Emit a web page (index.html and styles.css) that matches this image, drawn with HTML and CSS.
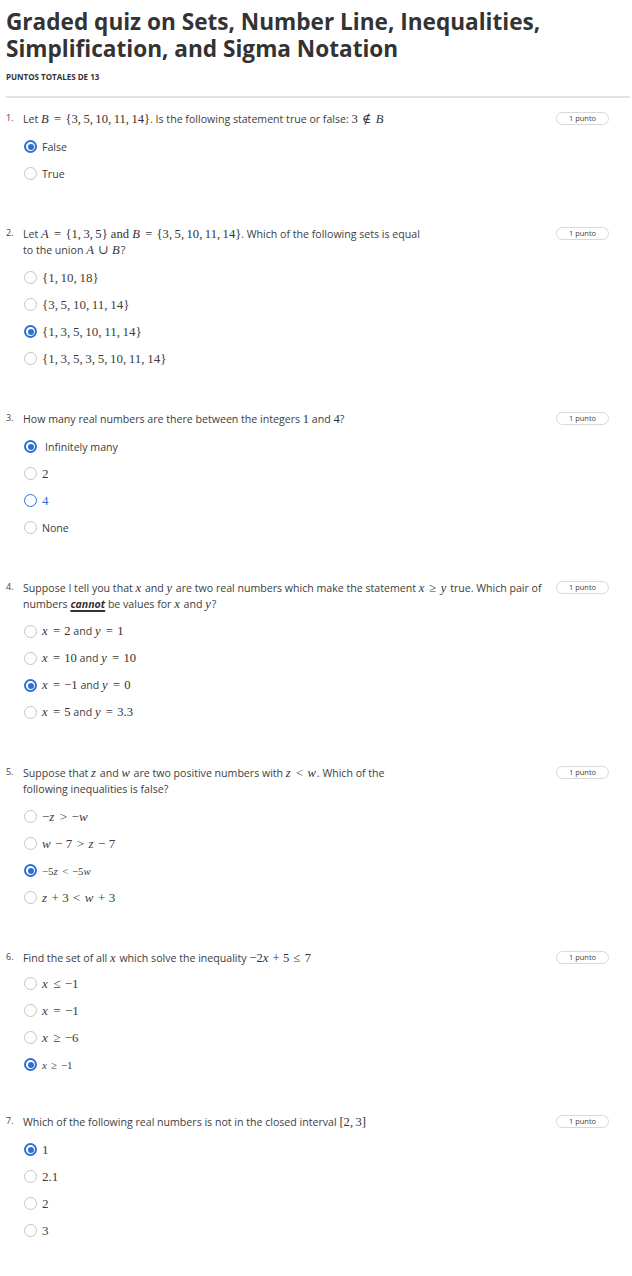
FILE: index.html
```html
<!DOCTYPE html>
<html lang="en">
<head>
<meta charset="utf-8">
<title>Graded quiz</title>
<link rel="stylesheet" href="styles.css">
</head>
<body>
<div class="page">
  <header class="header">
    <h1 class="title">Graded quiz on Sets, Number Line, Inequalities, Simplification, and Sigma Notation</h1>
    <div class="total">PUNTOS TOTALES DE 13</div>
  </header>

  <section class="q">
    <div class="qhead">
      <span class="num">1.</span>
      <div class="prompt">Let <span class="m"><i>B</i><span class="r">=</span>{3,&#8201;5,&#8201;10,&#8201;11,&#8201;14}</span>. Is the following statement true or false: <span class="m">3<span class="r">&#8713;</span><i>B</i></span></div>
      <span class="badge">1 punto</span>
    </div>
    <div class="opts">
      <div class="opt"><span class="radio sel"></span><span class="lbl">False</span></div>
      <div class="opt"><span class="radio"></span><span class="lbl">True</span></div>
    </div>
  </section>

  <section class="q">
    <div class="qhead">
      <span class="num">2.</span>
      <div class="prompt">Let <span class="m"><i>A</i><span class="r">=</span>{1,&#8201;3,&#8201;5} and <i>B</i><span class="r">=</span>{3,&#8201;5,&#8201;10,&#8201;11,&#8201;14}</span>. Which of the following sets is equal<br>to the union <span class="m"><i>A</i><span class="b">&#8746;</span><i>B</i></span>?</div>
      <span class="badge">1 punto</span>
    </div>
    <div class="opts">
      <div class="opt"><span class="radio"></span><span class="lbl m">{1,&#8201;10,&#8201;18}</span></div>
      <div class="opt"><span class="radio"></span><span class="lbl m">{3,&#8201;5,&#8201;10,&#8201;11,&#8201;14}</span></div>
      <div class="opt"><span class="radio sel"></span><span class="lbl m">{1,&#8201;3,&#8201;5,&#8201;10,&#8201;11,&#8201;14}</span></div>
      <div class="opt"><span class="radio"></span><span class="lbl m">{1,&#8201;3,&#8201;5,&#8201;3,&#8201;5,&#8201;10,&#8201;11,&#8201;14}</span></div>
    </div>
  </section>

  <section class="q">
    <div class="qhead">
      <span class="num">3.</span>
      <div class="prompt">How many real numbers are there between the integers <span class="m">1</span> and <span class="m">4</span>?</div>
      <span class="badge">1 punto</span>
    </div>
    <div class="opts">
      <div class="opt"><span class="radio sel"></span><span class="lbl wide">Infinitely many</span></div>
      <div class="opt"><span class="radio"></span><span class="lbl m">2</span></div>
      <div class="opt focus"><span class="radio ring"></span><span class="lbl m">4</span></div>
      <div class="opt"><span class="radio"></span><span class="lbl">None</span></div>
    </div>
  </section>

  <section class="q">
    <div class="qhead">
      <span class="num">4.</span>
      <div class="prompt">Suppose I tell you that <span class="m"><i>x</i></span> and <span class="m"><i>y</i></span> are two real numbers which make the statement <span class="m"><i>x</i><span class="r">&#8805;</span><i>y</i></span> true. Which pair of<br>numbers <b class="em">cannot</b> be values for <span class="m"><i>x</i></span> and <span class="m"><i>y</i></span>?</div>
      <span class="badge">1 punto</span>
    </div>
    <div class="opts">
      <div class="opt"><span class="radio"></span><span class="lbl"><span class="m om"><i>x</i><span class="r">=</span>2</span> and <span class="m om"><i>y</i><span class="r">=</span>1</span></span></div>
      <div class="opt"><span class="radio"></span><span class="lbl"><span class="m om"><i>x</i><span class="r">=</span>10</span> and <span class="m om"><i>y</i><span class="r">=</span>10</span></span></div>
      <div class="opt"><span class="radio sel"></span><span class="lbl"><span class="m om"><i>x</i><span class="r">=</span>&#8722;1</span> and <span class="m om"><i>y</i><span class="r">=</span>0</span></span></div>
      <div class="opt"><span class="radio"></span><span class="lbl"><span class="m om"><i>x</i><span class="r">=</span>5</span> and <span class="m om"><i>y</i><span class="r">=</span>3.3</span></span></div>
    </div>
  </section>

  <section class="q">
    <div class="qhead">
      <span class="num">5.</span>
      <div class="prompt">Suppose that <span class="m"><i>z</i></span> and <span class="m"><i>w</i></span> are two positive numbers with <span class="m"><i>z</i><span class="r">&lt;</span><i>w</i></span>. Which of the<br>following inequalities is false?</div>
      <span class="badge">1 punto</span>
    </div>
    <div class="opts">
      <div class="opt"><span class="radio"></span><span class="lbl m">&#8722;<i>z</i><span class="r">&gt;</span>&#8722;<i>w</i></span></div>
      <div class="opt"><span class="radio"></span><span class="lbl m"><i>w</i><span class="b">&#8722;</span>7<span class="r">&gt;</span><i>z</i><span class="b">&#8722;</span>7</span></div>
      <div class="opt"><span class="radio sel"></span><span class="lbl m small">&#8722;5<i>z</i><span class="r">&lt;</span>&#8722;5<i>w</i></span></div>
      <div class="opt"><span class="radio"></span><span class="lbl m"><i>z</i><span class="b">+</span>3<span class="r">&lt;</span><i>w</i><span class="b">+</span>3</span></div>
    </div>
  </section>

  <section class="q tight">
    <div class="qhead">
      <span class="num">6.</span>
      <div class="prompt">Find the set of all <span class="m"><i>x</i></span> which solve the inequality <span class="m">&#8722;2<i>x</i><span class="b">+</span>5<span class="r">&#8804;</span>7</span></div>
      <span class="badge">1 punto</span>
    </div>
    <div class="opts">
      <div class="opt"><span class="radio"></span><span class="lbl m"><i>x</i><span class="r">&#8804;</span>&#8722;1</span></div>
      <div class="opt"><span class="radio"></span><span class="lbl m"><i>x</i><span class="r">=</span>&#8722;1</span></div>
      <div class="opt"><span class="radio"></span><span class="lbl m"><i>x</i><span class="r">&#8805;</span>&#8722;6</span></div>
      <div class="opt"><span class="radio sel"></span><span class="lbl m small"><i>x</i><span class="r">&#8805;</span>&#8722;1</span></div>
    </div>
  </section>

  <section class="q">
    <div class="qhead">
      <span class="num">7.</span>
      <div class="prompt">Which of the following real numbers is not in the closed interval <span class="m">[2,&#8201;3]</span></div>
      <span class="badge">1 punto</span>
    </div>
    <div class="opts">
      <div class="opt"><span class="radio sel"></span><span class="lbl m">1</span></div>
      <div class="opt"><span class="radio"></span><span class="lbl m">2.1</span></div>
      <div class="opt"><span class="radio"></span><span class="lbl m">2</span></div>
      <div class="opt"><span class="radio"></span><span class="lbl m">3</span></div>
    </div>
  </section>
</div>
</body>
</html>
```

FILE: styles.css
```css
html, body {
  margin: 0;
  padding: 0;
  background: #ffffff;
}

body {
  font-family: "Open Sans", "Noto Sans", sans-serif;
  color: #3a3a3a;
}

.page {
  padding: 0 2px 0 6px;
}

.header {
  padding-top: 8px;
  border-bottom: 2px solid #e2e2e2;
  padding-bottom: 14px;
}

.title {
  margin: 0;
  font-size: 22.6px;
  line-height: 27px;
  font-weight: 700;
  color: #333333;
  max-width: 560px;
}

.total {
  margin-top: 10px;
  font-size: 8px;
  line-height: 10px;
  font-weight: 700;
  color: #333333;
}

.q {
  padding-top: 12px;
  padding-bottom: 27px;
}

.q:first-of-type {
  padding-top: 13px;
}

.q.tight {
  padding-bottom: 24px;
}

.q.tight .opts {
  margin-top: 4px;
}

.qhead {
  display: flex;
  align-items: flex-start;
}

.num {
  width: 17px;
  flex: none;
  font-size: 9px;
  line-height: 14px;
  color: #444444;
}

.prompt {
  flex: 1;
  font-size: 10.6px;
  line-height: 16px;
  color: #3d3d3d;
}

.badge {
  flex: none;
  width: 51px;
  height: 11px;
  margin: 1px 21px 0 4px;
  border: 1.5px solid #d9d9d9;
  border-radius: 8px;
  font-size: 7.5px;
  line-height: 11px;
  text-align: center;
  color: #444444;
}

.m {
  font-family: "Liberation Serif", "DejaVu Serif", serif;
  font-size: 12.6px;
  color: #333333;
}

.m i {
  font-style: italic;
  padding-right: 0.08em;
}

.r {
  margin: 0 0.34em;
}

.b {
  margin: 0 0.26em;
}

.em {
  font-style: italic;
  font-weight: 700;
  text-decoration: underline;
  text-decoration-thickness: 2px;
  text-underline-offset: 2px;
  color: #333333;
}

.opts {
  margin-top: 6px;
  display: flex;
  flex-direction: column;
}

.opt {
  height: 27px;
  display: flex;
  align-items: center;
  padding-left: 18px;
}

.radio {
  flex: none;
  box-sizing: border-box;
  width: 13px;
  height: 13px;
  border-radius: 50%;
  border: 1px solid #c4c4c4;
  background: #ffffff;
  position: relative;
}

.radio.sel {
  border: 2px solid #2f6fd2;
}

.radio.sel::after {
  content: "";
  position: absolute;
  left: 1.5px;
  top: 1.5px;
  width: 6px;
  height: 6px;
  border-radius: 50%;
  background: #2f6fd2;
}

.radio.ring {
  border: 1.5px solid #2f6fd2;
}

.lbl {
  margin-left: 5px;
  font-size: 10.6px;
  color: #3d3d3d;
}

.lbl.m {
  font-size: 13px;
}

.lbl .m.om {
  font-size: 12.6px;
}

.lbl.m.small {
  font-size: 10.8px;
}

.lbl.wide {
  margin-left: 8px;
}

.focus .lbl {
  color: #2f6fd2;
}
```
